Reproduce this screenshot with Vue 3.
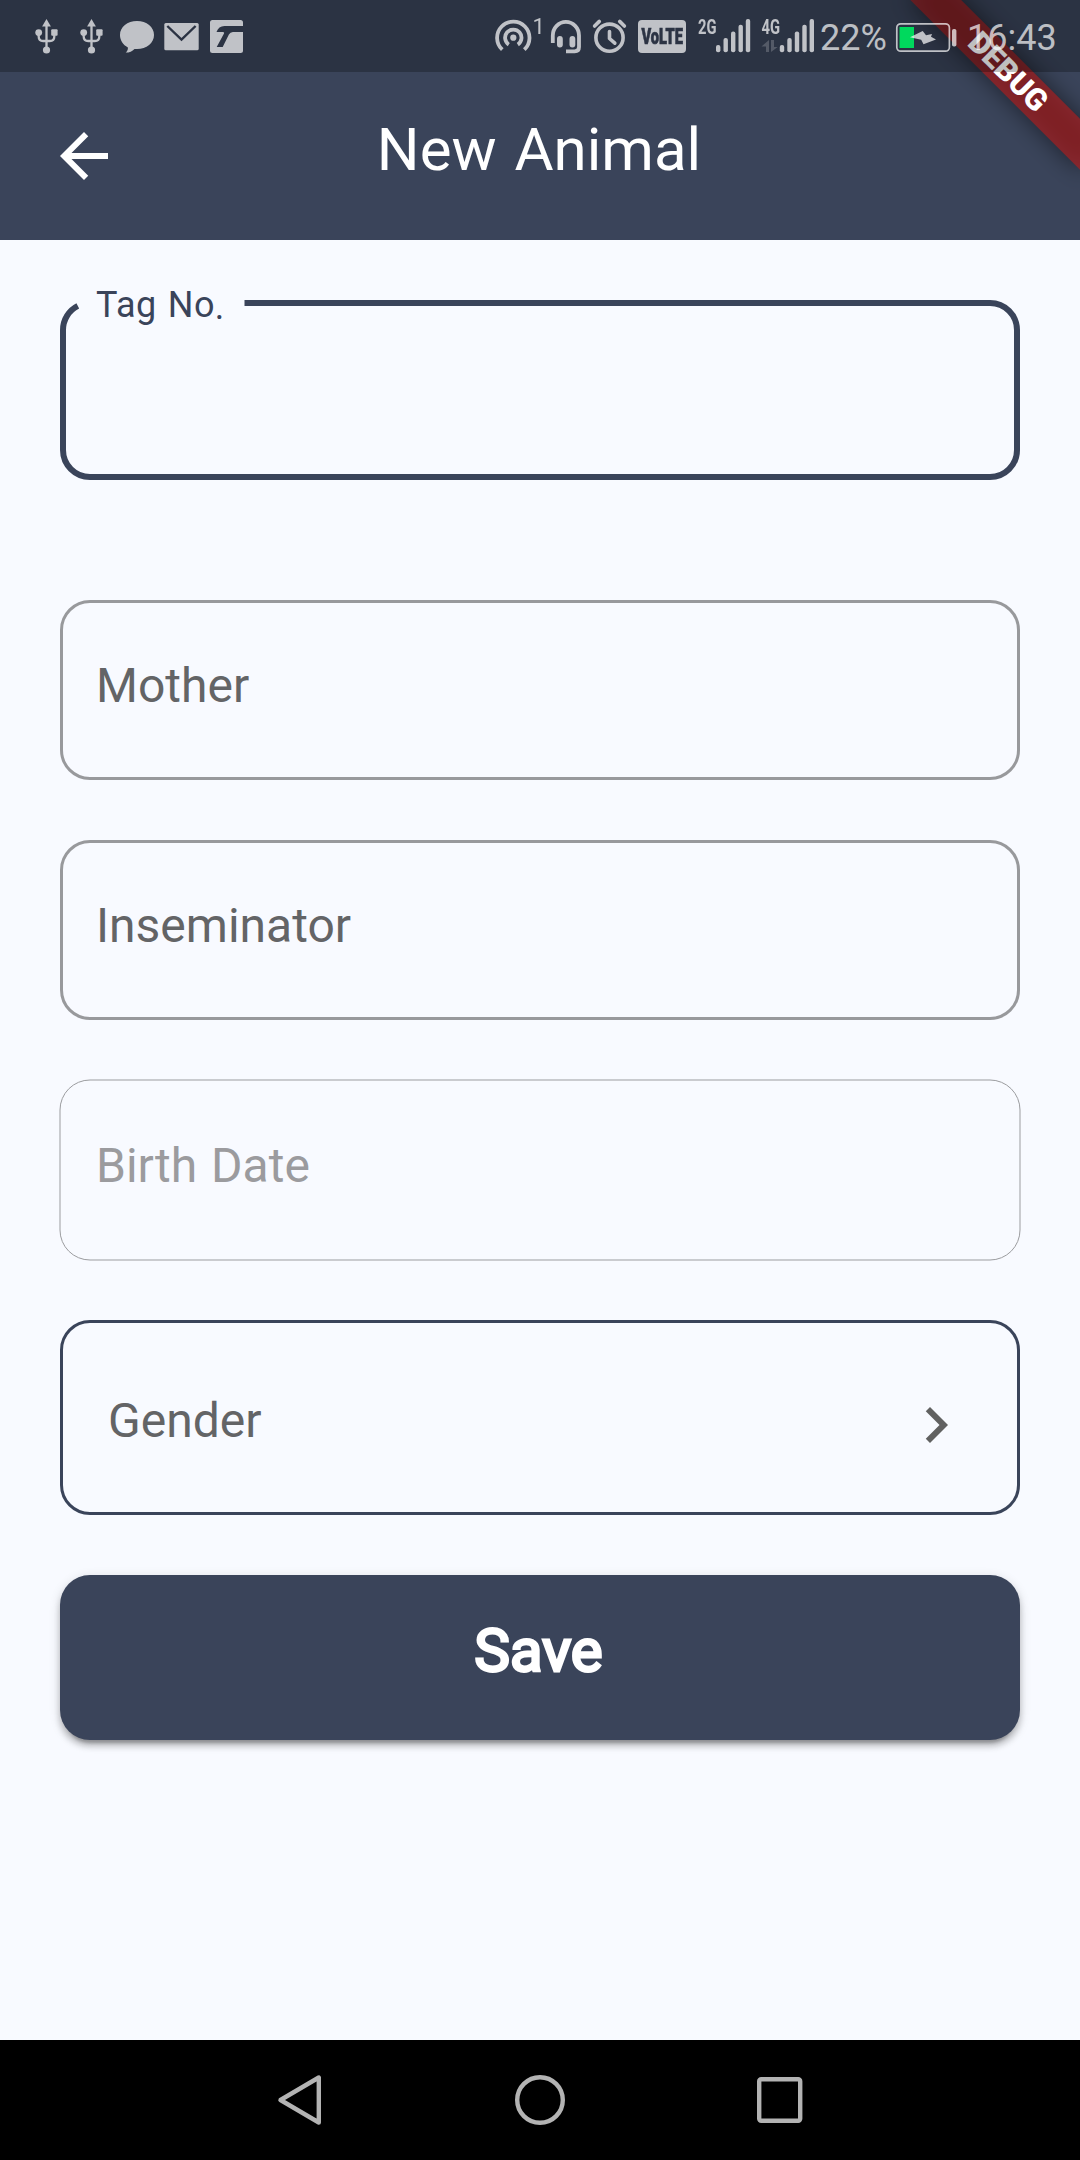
<script setup>
const usbOffsets = [0, 45]
const bars = [
  { x: 0, top: 45 },
  { x: 7.5, top: 38 },
  { x: 15, top: 31.5 },
  { x: 22.5, top: 24.7 },
  { x: 29.8, top: 19 },
]
const fields = [
  { label: 'Mother', disabled: false },
  { label: 'Inseminator', disabled: false },
  { label: 'Birth Date', disabled: true },
]
</script>

<template>
  <div class="screen">
    <header class="appbar">
      <button class="back" aria-label="Back">
        <svg width="72" height="72" viewBox="0 0 24 24" fill="#fff">
          <path d="M20 11H7.83l5.59-5.59L12 4l-8 8 8 8 1.41-1.41L7.83 13H20z" />
        </svg>
      </button>
      <h1 class="title">New Animal</h1>
      <span class="spacer"></span>
    </header>

    <svg class="banner" width="240" height="240" viewBox="840 0 240 240">
      <defs>
        <filter id="soft" x="-50%" y="-200%" width="200%" height="500%">
          <feGaussianBlur stdDeviation="12" />
        </filter>
      </defs>
      <g transform="translate(1080 0) rotate(45)">
        <rect x="-120" y="84" width="240" height="36" fill="#000" fill-opacity=".5" filter="url(#soft)" />
        <rect x="-122" y="84" width="244" height="36" fill="#b71c1c" fill-opacity=".627" />
        <text class="debug" x="0" y="112" text-anchor="middle">DEBUG</text>
      </g>
    </svg>

    <div class="status">
      <svg class="ink" width="480" height="72" viewBox="0 0 480 72">
        <g v-for="dx in usbOffsets" :key="dx" :transform="`translate(${dx} 0)`">
          <path d="M46.5 19l4.4 7.6h-8.8z" />
          <circle cx="46.5" cy="50" r="3.6" />
          <circle cx="38.7" cy="32.6" r="3.4" />
          <rect x="51.2" y="29.2" width="6.4" height="6.6" rx="1" />
          <path class="line" stroke-width="2.3" d="M46.5 25v22M38.7 33v3.5q0 4.5 4.5 4.5h6.6q4.5 0 4.5-4.5V33" />
        </g>
        <path d="M137 21c9.600 0 17 6 17 14s-7.400 14-17 14l-2.500-.1c-2.200 2.300-5 3.700-8.800 3.700 1.700-1.500 2.300-3.200 2.200-5.200-4.900-2.500-7.900-7.200-7.900-12.400 0-8 7.400-14 17-14z" />
        <rect x="164.300" y="23" width="34.400" height="27.300" rx="1.500" />
        <path class="cut-line" d="M167.300 26l14.200 13.700L195.600 26" />
        <rect x="210" y="20" width="33" height="33" rx="2.500" />
        <path class="cut" d="M243 26h-18.500q-6 0-8 6h6.500q1.700 0 1 1.600L216.700 47h6l6.200-12.400q1.300-2.600 4-2.600H243z" />
      </svg>
      <svg class="ink" width="340" height="72" viewBox="480 0 340 72">
        <circle cx="513.300" cy="37.700" r="3.100" />
        <path class="line" stroke-width="3.800" d="M508.800 44.600a8.200 8.200 0 1 1 9 0M502.300 49.700a16.200 16.200 0 1 1 22 0" />
        <text x="532.500" y="34" class="sup">1</text>
        <path class="line" stroke-width="3.800" d="M552.800 43v-7.500a13.100 13.700 0 0 1 26.200 0v11.500q0 4.300-4.300 4.300H566" />
        <rect x="557" y="36" width="5.800" height="11.500" rx="2.900" />
        <rect x="569.500" y="36" width="5.800" height="11.500" rx="2.900" />
        <circle class="line" cx="609.500" cy="37.700" r="13.600" stroke-width="3.600" />
        <path class="line" stroke-width="3.600" stroke-linecap="round" stroke-linejoin="round" d="M609.500 31.500v7l5.300 4.700M594.600 26l4.700-4.600M624.400 26l-4.700-4.600" />
        <rect x="638" y="20" width="48" height="33" rx="4" />
        <text class="cut volte" transform="translate(641.500 44) scale(.67 1)" textLength="62" lengthAdjust="spacingAndGlyphs">VoLTE</text>
        <text class="net" x="698" y="34" textLength="18.500" lengthAdjust="spacingAndGlyphs">2G</text>
        <rect v-for="b in bars" :key="'a' + b.x" :x="716 + b.x" :y="b.top" width="4.400" :height="52.200 - b.top" rx="2" />
        <text class="net" x="761.500" y="34" textLength="18.500" lengthAdjust="spacingAndGlyphs">4G</text>
        <rect v-for="b in bars" :key="'b' + b.x" :x="779.800 + b.x" :y="b.top" width="4.400" :height="52.200 - b.top" rx="2" />
        <path opacity=".28" d="M769 40v12h-3v-5.500h-4.500zM771 40h3v7h3.700L771 52z" />
      </svg>
      <span class="pct">22%</span>
      <svg class="battery" width="64" height="72" viewBox="894 0 64 72">
        <rect x="899.500" y="27" width="14.500" height="21" fill="#00d95d" />
        <g class="ink">
          <rect class="line" x="896.800" y="23.800" width="52.600" height="27.400" rx="4" stroke-width="1.700" />
          <path d="M910 37.200l12.700-6.200 3.300 4.300 6-1.300-1 2.800 5 2.600-12.500 4.800-2.300-4.400z" />
          <rect x="952" y="29" width="4.400" height="17.500" rx="1.800" />
        </g>
      </svg>
      <span class="clock">16:43</span>
    </div>

    <main class="form">
      <div class="field active">
        <svg class="outline" width="960" height="180" viewBox="0 0 960 180">
          <path d="M184.500 3H930a27 27 0 0 1 27 27V150a27 27 0 0 1-27 27H30a27 27 0 0 1-27-27V30A27 27 0 0 1 17.800 5.900" />
        </svg>
        <label class="float">Tag No<span class="dot">.</span></label>
      </div>
      <div v-for="f in fields" :key="f.label" class="field" :class="{ disabled: f.disabled }">
        <svg v-if="f.disabled" class="outline hair" width="962" height="182" viewBox="-1 -1 962 182">
          <rect x="0" y="0" width="960" height="180" rx="30" />
        </svg>
        <span class="label">{{ f.label }}</span>
      </div>
      <div class="picker">
        <span class="label">Gender</span>
        <svg width="72" height="72" viewBox="0 0 24 24" fill="#616161">
          <path d="M10 6L8.590 7.410 13.170 12l-4.580 4.590L10 18l6-6z" />
        </svg>
      </div>
      <button class="save"><span>Save</span></button>
    </main>

    <nav class="navbar">
      <svg width="60" height="60" viewBox="0 0 60 60">
        <path stroke-linejoin="round" d="M48.800 7.500v45L10.500 30z" />
      </svg>
      <svg width="60" height="60" viewBox="0 0 60 60">
        <circle cx="30" cy="30" r="22.800" />
      </svg>
      <svg width="60" height="60" viewBox="0 0 60 60">
        <rect x="9.200" y="9.200" width="41" height="41.600" rx="2" />
      </svg>
    </nav>
  </div>
</template>

<style>
body {
  margin: 0;
}
</style>

<style scoped>
.screen {
  position: relative;
  display: flex;
  flex-direction: column;
  width: 1080px;
  height: 2160px;
  overflow: hidden;
  background: #f8faff;
  font-family: Roboto, "Liberation Sans", sans-serif;
}
svg {
  display: block;
  flex: none;
}
button {
  border: 0;
  padding: 0;
  background: none;
  font: inherit;
}
.appbar {
  display: flex;
  align-items: center;
  justify-content: space-between;
  box-sizing: border-box;
  height: 240px;
  padding: 72px 48px 0;
  background: #3a445a;
}
.back,
.spacer {
  width: 72px;
}
.title {
  margin: 0;
  padding-bottom: 12px;
  color: #fff;
  font-size: 60px;
  font-weight: 400;
  line-height: 72px;
  word-spacing: 3px;
  transform: translateX(-1px);
}
.banner {
  position: absolute;
  top: 0;
  right: 0;
}
.debug {
  fill: #fff;
  font-size: 30.6px;
  font-weight: 900;
}
.status {
  position: absolute;
  top: 0;
  left: 0;
  display: flex;
  width: 1080px;
  height: 72px;
  background: rgba(0, 0, 0, 0.25);
  color: rgba(255, 255, 255, 0.7);
  font-size: 36px;
  line-height: 76px;
  white-space: nowrap;
}
.ink {
  fill: #fff;
  opacity: 0.7;
}
.line {
  fill: none;
  stroke: #fff;
}
.cut {
  fill: #2c3344;
}
.cut-line {
  fill: none;
  stroke: #2c3344;
  stroke-width: 2.4;
}
.sup {
  font-size: 22px;
}
.volte {
  font-size: 22px;
  font-weight: 900;
  stroke: #2c3344;
  stroke-width: 0.7;
}
.net {
  font-size: 20.5px;
  font-weight: 700;
}
.pct {
  width: 74px;
}
.clock {
  padding-left: 9px;
}
.form {
  display: flex;
  flex: 1;
  flex-direction: column;
  gap: 60px;
  padding: 60px;
}
.field {
  position: relative;
  box-sizing: border-box;
  height: 180px;
  padding: 47px 33px;
  border: 3px solid #98999c;
  border-radius: 30px;
  color: #636466;
}
.field.active {
  margin-bottom: 60px;
  border-color: transparent;
  color: #3a445a;
}
.field.disabled {
  border-color: transparent;
  color: #9b9b9e;
}
.outline {
  position: absolute;
  top: -3px;
  left: -3px;
  fill: none;
  stroke: #3a445a;
  stroke-width: 6;
}
.hair {
  top: -4px;
  left: -4px;
  stroke: #9b9c9f;
  stroke-width: 1;
}
.float {
  position: absolute;
  top: -19px;
  left: 33px;
  font-size: 36px;
  line-height: 42px;
  letter-spacing: 0.4px;
  word-spacing: 2px;
}
.dot {
  position: relative;
  top: 2px;
}
.label {
  display: block;
  font-size: 48px;
  line-height: 72px;
  word-spacing: 2px;
}
.picker {
  display: flex;
  justify-content: space-between;
  box-sizing: border-box;
  height: 195px;
  padding: 66px 45px 0;
  border: 3px solid #3a445a;
  border-radius: 30px;
  color: #636466;
}
.picker .label {
  margin-top: -4px;
}
.save {
  height: 165px;
  padding: 0 3px 14px 0;
  border-radius: 30px;
  background: #3a445a;
  box-shadow: 0 9px 3px -6px rgba(0, 0, 0, 0.2), 0 6px 6px rgba(0, 0, 0, 0.2), 0 3px 12px rgba(0, 0, 0, 0.14);
  color: #fff;
  font-size: 60px;
  font-weight: 400;
  -webkit-text-stroke: 2.8px #fff;
}
.navbar {
  display: flex;
  align-items: center;
  justify-content: center;
  gap: 180px;
  height: 120px;
  background: #000;
}
.navbar svg {
  fill: none;
  stroke: #b3b3b3;
  stroke-width: 4.4;
}
</style>
